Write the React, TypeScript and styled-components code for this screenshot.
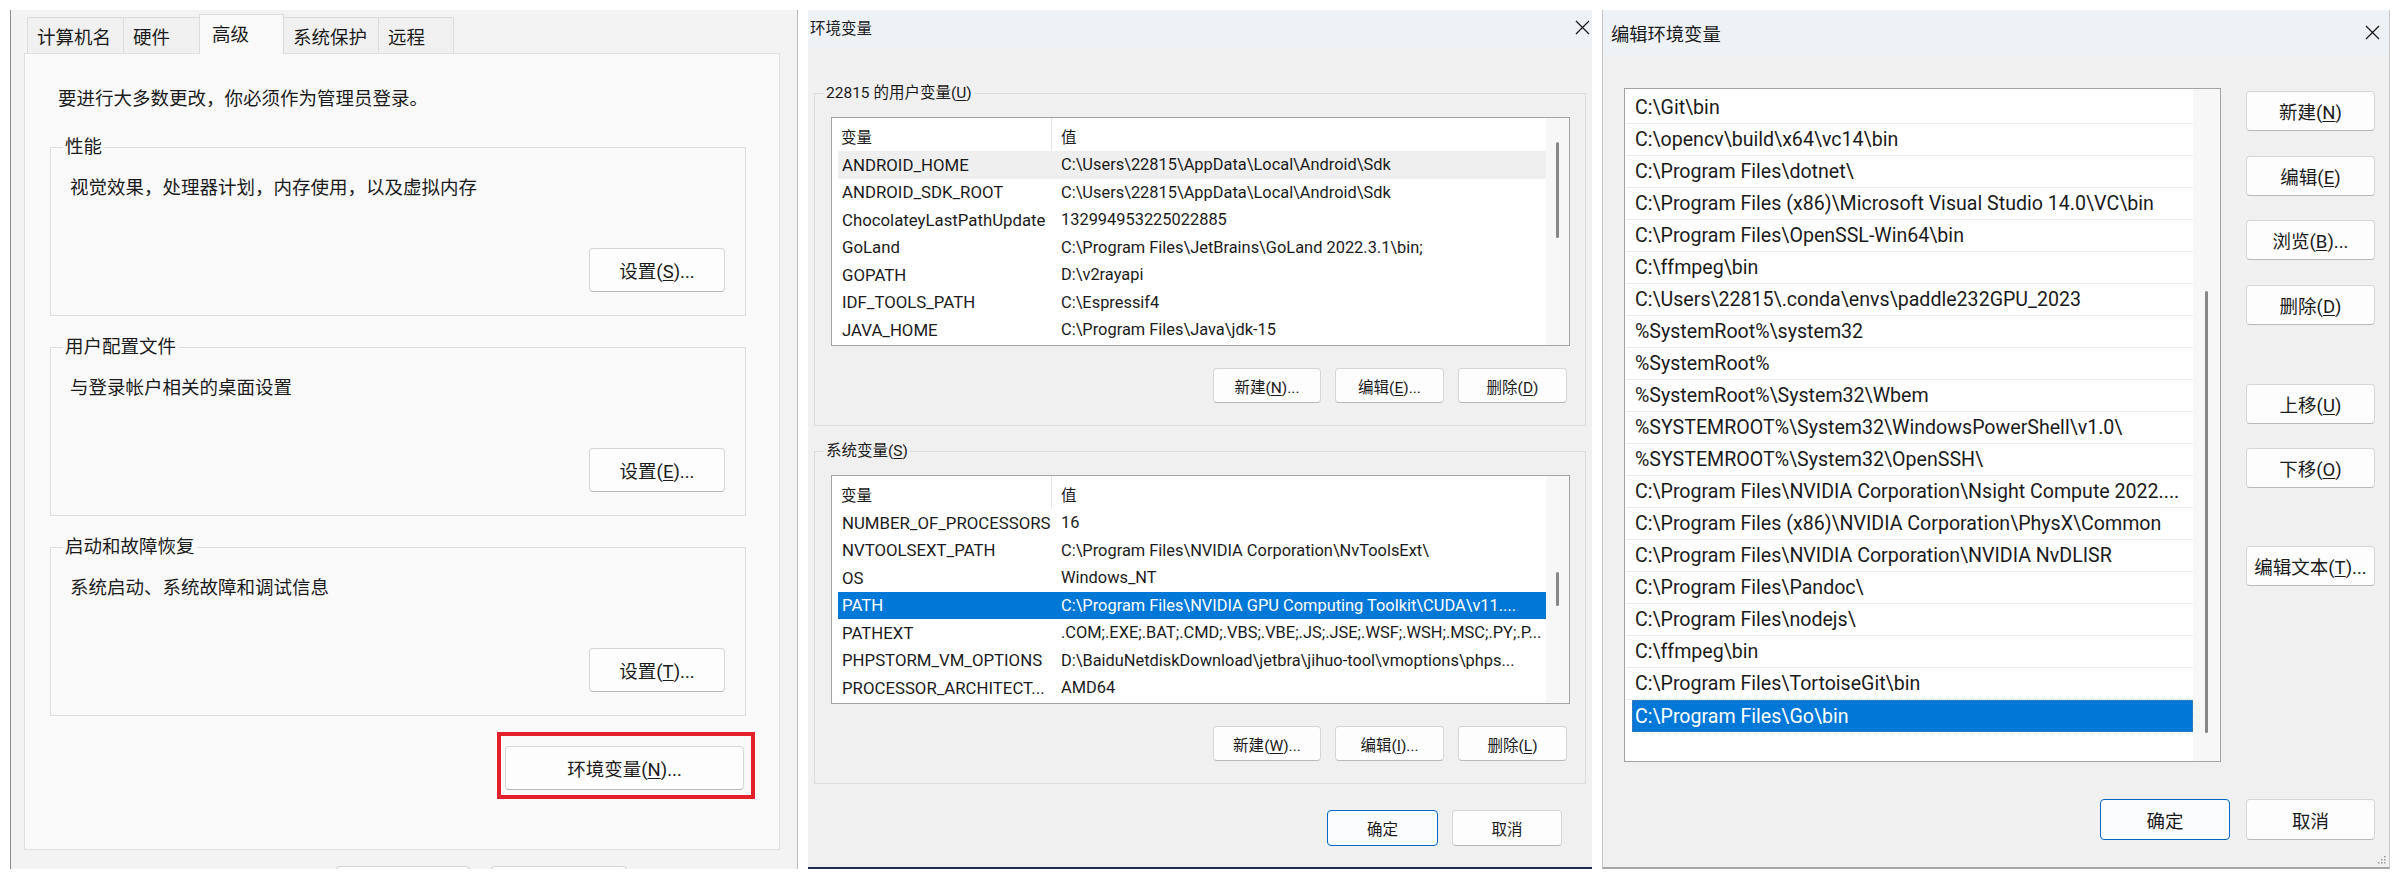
import React from "react";
import styled, { createGlobalStyle, css } from "styled-components";

const GlobalStyle = createGlobalStyle`
  html, body { margin: 0; padding: 0; background: #ffffff; }
  body { font-family: Roboto, "Noto Sans CJK SC", sans-serif; color: #1b1b1b; }
  *, *::before, *::after { box-sizing: border-box; }
  u { text-decoration-thickness: 1px; text-underline-offset: 2px; }
`;

const Page = styled.div`
  width: 2400px;
  height: 880px;
  overflow: hidden;
  background: #ffffff;
  display: flex;
  align-items: flex-start;
  gap: 10px;
  padding: 10px 0 0 10px;
`;

/* ---------- shared parts ---------- */
const Button = styled.button<{ $w: number; $h: number; $fs: number; $primary?: boolean; $mt?: number }>`
  width: ${(p) => p.$w}px;
  height: ${(p) => p.$h}px;
  margin: ${(p) => p.$mt ?? 0}px 0 0 0;
  flex-shrink: 0;
  display: inline-flex;
  align-items: center;
  justify-content: center;
  padding: 0;
  font-family: inherit;
  font-size: ${(p) => p.$fs}px;
  color: #1b1b1b;
  background: #fdfdfd;
  border: 1px solid #d6d6d6;
  border-bottom-color: #b9b9b9;
  border-radius: 4px;
  white-space: nowrap;
  ${(p) =>
    p.$primary &&
    css`
      border: 1.5px solid #0067c0;
      background: #fbfcfe;
    `}
`;

const TitleBar = styled.header<{ $h: number; $pl: number; $pr: number; $pb?: number; $fs: number }>`
  height: ${(p) => p.$h}px;
  flex-shrink: 0;
  background: #eef2f7;
  display: flex;
  align-items: center;
  justify-content: space-between;
  padding: 0 ${(p) => p.$pr}px ${(p) => p.$pb ?? 0}px ${(p) => p.$pl}px;
  font-size: ${(p) => p.$fs}px;
`;

const CloseGlyph = styled.svg`
  width: 15px;
  height: 15px;
  display: block;
`;

const CloseIcon = () => (
  <CloseGlyph viewBox="0 0 15 15">
    <path d="M1 1 L14 14 M14 1 L1 14" stroke="#1b1b1b" strokeWidth="1.3" fill="none" />
  </CloseGlyph>
);

const ScrollTrack = styled.div<{ $w: number }>`
  width: ${(p) => p.$w}px;
  flex-shrink: 0;
  background: #f7f7f7;
  display: flex;
  flex-direction: column;
  align-items: center;
`;

const ScrollThumb = styled.div<{ $top: number; $h: number }>`
  width: 3px;
  margin-top: ${(p) => p.$top}px;
  height: ${(p) => p.$h}px;
  border-radius: 2px;
  background: #878787;
`;

/* ---------- left: system properties ---------- */
const SysWindow = styled.section`
  width: 788px;
  height: 859px;
  flex-shrink: 0;
  overflow: hidden;
  background: #f3f3f3;
  border-left: 1px solid #8c8c8c;
  border-right: 1px solid #b9b9b9;
  padding: 4px 17px 0 13px;
  font-size: 18.5px;
  display: flex;
  flex-direction: column;
`;

const TabStrip = styled.div`
  display: flex;
  align-items: flex-start;
  height: 39px;
  padding-left: 3px;
  position: relative;
  z-index: 1;
`;

const Tab = styled.div<{ $w: number; $active?: boolean }>`
  width: ${(p) => p.$w}px;
  height: ${(p) => (p.$active ? 40 : 36)}px;
  margin-top: ${(p) => (p.$active ? 0 : 3)}px;
  padding-left: ${(p) => (p.$active ? 12 : 9)}px;
  padding-bottom: ${(p) => (p.$active ? 3 : 0)}px;
  display: flex;
  align-items: center;
  background: ${(p) => (p.$active ? "#f9f9f9" : "#f0f0f0")};
  border: 1px solid #dcdcdc;
  border-bottom: none;
  white-space: nowrap;
  & + & {
    margin-left: -1px;
  }
`;

const TabPane = styled.div`
  height: 797px;
  flex-shrink: 0;
  background: #f9f9f9;
  border: 1px solid #e1e1e1;
  padding: 32px 24px 0 25px;
  display: flex;
  flex-direction: column;
`;

const Notice = styled.p`
  margin: 0 0 0 8px;
  line-height: 26px;
`;

const PerfGroup = styled.div<{ $mt: number }>`
  position: relative;
  height: 169px;
  margin: ${(p) => p.$mt}px 9px 0 0;
  border: 1px solid #dedede;
  padding: 27px 20px 23px 19px;
  display: flex;
  flex-direction: column;
  justify-content: space-between;
`;

const PerfLegend = styled.span`
  position: absolute;
  top: -13px;
  left: 12px;
  padding: 0 2px;
  line-height: 24px;
  background: #f9f9f9;
`;

const PerfText = styled.div`
  line-height: 26px;
`;

const ActionRow = styled.div`
  display: flex;
  justify-content: flex-end;
`;

const Callout = styled.div`
  align-self: flex-end;
  margin-top: 16px;
  border: 4px solid #e3212d;
  padding: 10px 7px 5px 4px;
`;

const SysFooter = styled.div`
  display: flex;
  gap: 21px;
  padding: 16px 0 0 312px;
`;

/* ---------- middle: environment variables ---------- */
const EnvWindow = styled.section`
  width: 784px;
  height: 859px;
  flex-shrink: 0;
  overflow: hidden;
  background: #f0f0f0;
  border-bottom: 2px solid #1d2b4c;
  font-size: 15.5px;
  display: flex;
  flex-direction: column;
`;

const EnvBody = styled.div`
  padding: 45px 6px 0 6px;
  display: flex;
  flex-direction: column;
`;

const VarGroup = styled.div<{ $mt: number }>`
  position: relative;
  height: 333px;
  margin-top: ${(p) => p.$mt}px;
  border: 1px solid #dcdcdc;
  padding: 23px 15px 0 16px;
  display: flex;
  flex-direction: column;
`;

const VarLegend = styled.span`
  position: absolute;
  top: -11px;
  left: 9px;
  padding: 0 2px;
  line-height: 20px;
  background: #f0f0f0;
`;

const VarList = styled.div`
  height: 229px;
  flex-shrink: 0;
  border: 1px solid #a3a3a3;
  background: #ffffff;
  display: flex;
`;

const VarTable = styled.div`
  flex: 1;
  min-width: 0;
  padding-left: 6px;
  overflow: hidden;
`;

const VarHeader = styled.div`
  display: grid;
  grid-template-columns: 213px 1fr;
  height: 33px;
`;

const HeadCell = styled.div<{ $sep?: boolean }>`
  display: flex;
  align-items: center;
  padding: 3px 0 0 ${(p) => (p.$sep ? 9 : 3)}px;
  border-left: ${(p) => (p.$sep ? "1px solid #e6e6e6" : "none")};
`;

const VarRow = styled.div<{ $state?: "hover" | "selected" }>`
  display: grid;
  grid-template-columns: 213px 1fr;
  height: 27.5px;
  align-items: center;
  font-size: 16.8px;
  background: ${(p) => (p.$state === "selected" ? "#0078d7" : p.$state === "hover" ? "#efefef" : "transparent")};
  color: ${(p) => (p.$state === "selected" ? "#ffffff" : "#1b1b1b")};
`;

const VarCell = styled.div<{ $value?: boolean }>`
  padding-left: ${(p) => (p.$value ? 10 : 4)}px;
  padding-right: ${(p) => (p.$value ? 6 : 0)}px;
  font-size: ${(p) => (p.$value ? 16.4 : 16.8)}px;
  white-space: nowrap;
  overflow: hidden;
`;

const VarButtons = styled.div`
  display: flex;
  justify-content: flex-end;
  gap: 14px;
  margin-top: 22px;
  padding-right: 3px;
`;

const EnvFooter = styled.div`
  display: flex;
  justify-content: flex-end;
  gap: 14px;
  margin-top: 26px;
  padding-right: 24px;
`;

/* ---------- right: edit environment variable ---------- */
const EditWindow = styled.section`
  position: relative;
  width: 788px;
  height: 859px;
  flex-shrink: 0;
  overflow: hidden;
  background: #f0f0f0;
  border-left: 1px solid #c4c4c4;
  border-right: 1px solid #c8c8c8;
  border-bottom: 2px solid #a6a6a6;
  font-size: 18.5px;
  display: flex;
  flex-direction: column;
`;

const EditBody = styled.div`
  padding: 33px 14px 0 21px;
  display: flex;
  flex-direction: column;
`;

const EditMain = styled.div`
  display: flex;
  gap: 25px;
`;

const PathList = styled.div`
  width: 597px;
  height: 674px;
  flex-shrink: 0;
  border: 1px solid #a3a3a3;
  background: #ffffff;
  display: flex;
`;

const PathRows = styled.div`
  flex: 1;
  min-width: 0;
  padding: 3px 0 0 1px;
`;

const PathRow = styled.div<{ $selected?: boolean }>`
  height: 32px;
  display: flex;
  align-items: center;
  padding-left: 9px;
  font-size: 19.6px;
  white-space: nowrap;
  overflow: hidden;
  border-bottom: 1px solid #ededed;
  ${(p) =>
    p.$selected &&
    css`
      margin-left: 6px;
      padding-left: 3px;
      background: #0078d7;
      color: #ffffff;
      border-bottom: none;
      outline: 1px dotted #5a7fa8;
      outline-offset: -1px;
    `}
`;

const ButtonColumn = styled.div`
  width: 129px;
  display: flex;
  flex-direction: column;
  padding-top: 3px;
`;

const EditFooter = styled.div`
  display: flex;
  justify-content: flex-end;
  gap: 16px;
  margin-top: 37px;
`;

const Grip = styled.svg`
  position: absolute;
  right: 3px;
  bottom: 3px;
  width: 9px;
  height: 9px;
`;

/* ---------- data ---------- */
type Var = { name: string; value: string; state?: "hover" | "selected" };

const userVars: Var[] = [
  { name: "ANDROID_HOME", value: "C:\\Users\\22815\\AppData\\Local\\Android\\Sdk", state: "hover" },
  { name: "ANDROID_SDK_ROOT", value: "C:\\Users\\22815\\AppData\\Local\\Android\\Sdk" },
  { name: "ChocolateyLastPathUpdate", value: "132994953225022885" },
  { name: "GoLand", value: "C:\\Program Files\\JetBrains\\GoLand 2022.3.1\\bin;" },
  { name: "GOPATH", value: "D:\\v2rayapi" },
  { name: "IDF_TOOLS_PATH", value: "C:\\Espressif4" },
  { name: "JAVA_HOME", value: "C:\\Program Files\\Java\\jdk-15" },
];

const sysVars: Var[] = [
  { name: "NUMBER_OF_PROCESSORS", value: "16" },
  { name: "NVTOOLSEXT_PATH", value: "C:\\Program Files\\NVIDIA Corporation\\NvToolsExt\\" },
  { name: "OS", value: "Windows_NT" },
  { name: "PATH", value: "C:\\Program Files\\NVIDIA GPU Computing Toolkit\\CUDA\\v11....", state: "selected" },
  { name: "PATHEXT", value: ".COM;.EXE;.BAT;.CMD;.VBS;.VBE;.JS;.JSE;.WSF;.WSH;.MSC;.PY;.P..." },
  { name: "PHPSTORM_VM_OPTIONS", value: "D:\\BaiduNetdiskDownload\\jetbra\\jihuo-tool\\vmoptions\\phps..." },
  { name: "PROCESSOR_ARCHITECT...", value: "AMD64" },
];

const pathEntries = [
  "C:\\Git\\bin",
  "C:\\opencv\\build\\x64\\vc14\\bin",
  "C:\\Program Files\\dotnet\\",
  "C:\\Program Files (x86)\\Microsoft Visual Studio 14.0\\VC\\bin",
  "C:\\Program Files\\OpenSSL-Win64\\bin",
  "C:\\ffmpeg\\bin",
  "C:\\Users\\22815\\.conda\\envs\\paddle232GPU_2023",
  "%SystemRoot%\\system32",
  "%SystemRoot%",
  "%SystemRoot%\\System32\\Wbem",
  "%SYSTEMROOT%\\System32\\WindowsPowerShell\\v1.0\\",
  "%SYSTEMROOT%\\System32\\OpenSSH\\",
  "C:\\Program Files\\NVIDIA Corporation\\Nsight Compute 2022....",
  "C:\\Program Files (x86)\\NVIDIA Corporation\\PhysX\\Common",
  "C:\\Program Files\\NVIDIA Corporation\\NVIDIA NvDLISR",
  "C:\\Program Files\\Pandoc\\",
  "C:\\Program Files\\nodejs\\",
  "C:\\ffmpeg\\bin",
  "C:\\Program Files\\TortoiseGit\\bin",
  "C:\\Program Files\\Go\\bin",
];

const tabs = [
  { label: "计算机名", w: 97 },
  { label: "硬件", w: 77 },
  { label: "高级", w: 85, active: true },
  { label: "系统保护", w: 96 },
  { label: "远程", w: 76 },
];

const perfGroups = [
  { title: "性能", text: "视觉效果，处理器计划，内存使用，以及虚拟内存", key: "S", mt: 35 },
  { title: "用户配置文件", text: "与登录帐户相关的桌面设置", key: "E", mt: 31 },
  { title: "启动和故障恢复", text: "系统启动、系统故障和调试信息", key: "T", mt: 31 },
];

const Mn = ({ pre, k, post = "" }: { pre: string; k: string; post?: string }) => (
  <span>
    {pre}(<u>{k}</u>){post}
  </span>
);

const VarSection = ({
  legend,
  rows,
  thumbTop,
  thumbH,
  keys,
  mt,
}: {
  legend: React.ReactNode;
  rows: Var[];
  thumbTop: number;
  thumbH: number;
  keys: [string, string, string];
  mt: number;
}) => (
  <VarGroup $mt={mt}>
    <VarLegend>{legend}</VarLegend>
    <VarList>
      <VarTable>
        <VarHeader>
          <HeadCell>变量</HeadCell>
          <HeadCell $sep>值</HeadCell>
        </VarHeader>
        {rows.map((r) => (
          <VarRow key={r.name} $state={r.state}>
            <VarCell>{r.name}</VarCell>
            <VarCell $value>{r.value}</VarCell>
          </VarRow>
        ))}
      </VarTable>
      <ScrollTrack $w={23}>
        <ScrollThumb $top={thumbTop} $h={thumbH} />
      </ScrollTrack>
    </VarList>
    <VarButtons>
      <Button $w={108} $h={35} $fs={15.5}>
        <Mn pre="新建" k={keys[0]} post="..." />
      </Button>
      <Button $w={109} $h={35} $fs={15.5}>
        <Mn pre="编辑" k={keys[1]} post="..." />
      </Button>
      <Button $w={109} $h={35} $fs={15.5}>
        <Mn pre="删除" k={keys[2]} />
      </Button>
    </VarButtons>
  </VarGroup>
);

export default function App() {
  return (
    <>
      <GlobalStyle />
      <Page>
        {/* System properties / Advanced */}
        <SysWindow>
          <TabStrip>
            {tabs.map((t) => (
              <Tab key={t.label} $w={t.w} $active={t.active}>
                {t.label}
              </Tab>
            ))}
          </TabStrip>
          <TabPane>
            <Notice>要进行大多数更改，你必须作为管理员登录。</Notice>
            {perfGroups.map((g) => (
              <PerfGroup key={g.title} $mt={g.mt}>
                <PerfLegend>{g.title}</PerfLegend>
                <PerfText>{g.text}</PerfText>
                <ActionRow>
                  <Button $w={136} $h={44} $fs={18.5}>
                    <Mn pre="设置" k={g.key} post="..." />
                  </Button>
                </ActionRow>
              </PerfGroup>
            ))}
            <Callout>
              <Button $w={239} $h={44} $fs={18.5}>
                <Mn pre="环境变量" k="N" post="..." />
              </Button>
            </Callout>
          </TabPane>
          <SysFooter>
            <Button $w={134} $h={40} $fs={18.5} aria-label="确定" />
            <Button $w={136} $h={40} $fs={18.5} aria-label="取消" />
          </SysFooter>
        </SysWindow>

        {/* Environment variables */}
        <EnvWindow>
          <TitleBar $h={38} $pl={2} $pr={2} $pb={4} $fs={15.5}>
            <span>环境变量</span>
            <CloseIcon />
          </TitleBar>
          <EnvBody>
            <VarSection
              mt={0}
              legend={<Mn pre="22815 的用户变量" k="U" />}
              rows={userVars}
              thumbTop={24}
              thumbH={96}
              keys={["N", "E", "D"]}
            />
            <VarSection
              mt={25}
              legend={<Mn pre="系统变量" k="S" />}
              rows={sysVars}
              thumbTop={96}
              thumbH={34}
              keys={["W", "I", "L"]}
            />
            <EnvFooter>
              <Button $w={111} $h={36} $fs={15.5} $primary>确定</Button>
              <Button $w={110} $h={36} $fs={15.5}>取消</Button>
            </EnvFooter>
          </EnvBody>
        </EnvWindow>

        {/* Edit environment variable */}
        <EditWindow>
          <TitleBar $h={45} $pl={8} $pr={9} $fs={18.3}>
            <span>编辑环境变量</span>
            <CloseIcon />
          </TitleBar>
          <EditBody>
            <EditMain>
              <PathList>
                <PathRows>
                  {pathEntries.map((p, i) => (
                    <PathRow key={i} $selected={i === pathEntries.length - 1}>
                      {p}
                    </PathRow>
                  ))}
                </PathRows>
                <ScrollTrack $w={27}>
                  <ScrollThumb $top={202} $h={442} />
                </ScrollTrack>
              </PathList>
              <ButtonColumn>
                <Button $w={129} $h={40} $fs={18.5}>
                  <Mn pre="新建" k="N" />
                </Button>
                <Button $w={129} $h={40} $fs={18.5} $mt={25}>
                  <Mn pre="编辑" k="E" />
                </Button>
                <Button $w={129} $h={40} $fs={18.5} $mt={24}>
                  <Mn pre="浏览" k="B" post="..." />
                </Button>
                <Button $w={129} $h={40} $fs={18.5} $mt={25}>
                  <Mn pre="删除" k="D" />
                </Button>
                <Button $w={129} $h={40} $fs={18.5} $mt={59}>
                  <Mn pre="上移" k="U" />
                </Button>
                <Button $w={129} $h={40} $fs={18.5} $mt={24}>
                  <Mn pre="下移" k="O" />
                </Button>
                <Button $w={129} $h={40} $fs={18.5} $mt={58}>
                  <Mn pre="编辑文本" k="T" post="..." />
                </Button>
              </ButtonColumn>
            </EditMain>
            <EditFooter>
              <Button $w={130} $h={41} $fs={18.5} $primary>确定</Button>
              <Button $w={129} $h={41} $fs={18.5}>取消</Button>
            </EditFooter>
          </EditBody>
          <Grip viewBox="0 0 9 9">
            <rect x="7" y="1" width="1.5" height="1.5" fill="#9a9a9a" />
            <rect x="4" y="4" width="1.5" height="1.5" fill="#9a9a9a" />
            <rect x="7" y="4" width="1.5" height="1.5" fill="#9a9a9a" />
            <rect x="1" y="7" width="1.5" height="1.5" fill="#9a9a9a" />
            <rect x="4" y="7" width="1.5" height="1.5" fill="#9a9a9a" />
            <rect x="7" y="7" width="1.5" height="1.5" fill="#9a9a9a" />
          </Grip>
        </EditWindow>
      </Page>
    </>
  );
}
